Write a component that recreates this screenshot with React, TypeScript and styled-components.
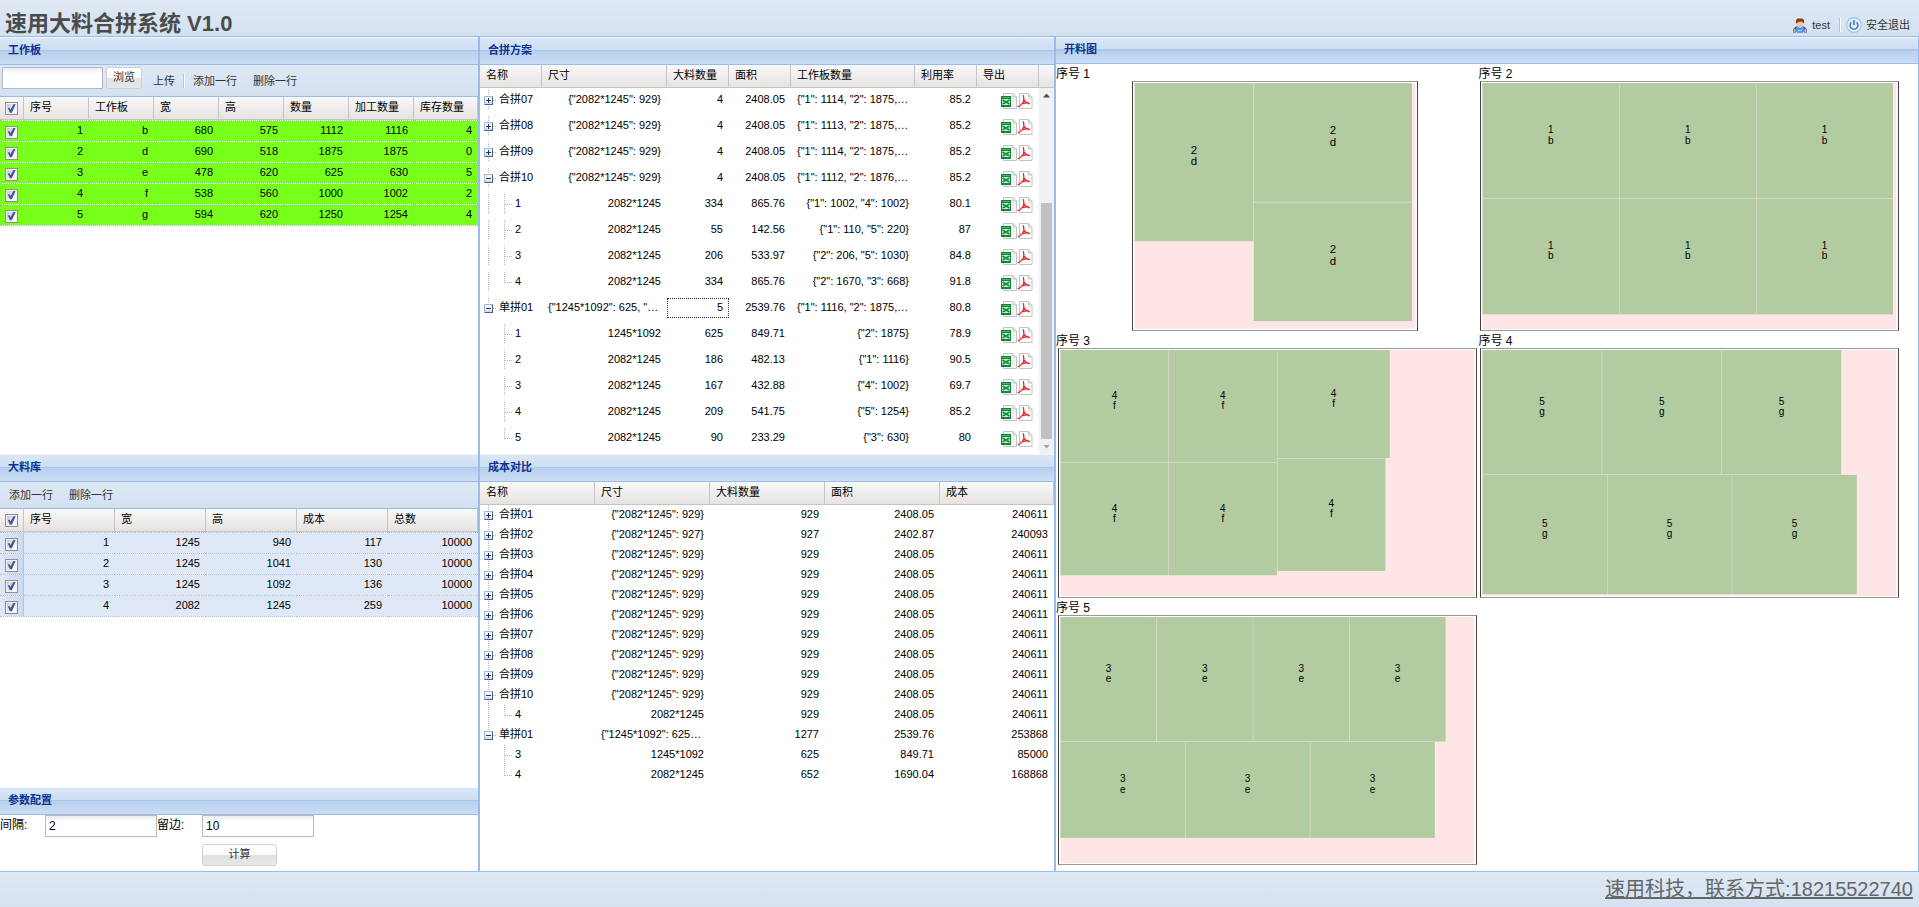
import React from "react";
import styled, { createGlobalStyle, css } from "styled-components";

const LINE = "#99bce8";

const GlobalStyle = createGlobalStyle`
  *, *::before, *::after { box-sizing: border-box; }
  body {
    margin: 0;
    background: #fff;
    color: #000;
    font: 11px/13px "Liberation Sans", "Noto Sans CJK SC", sans-serif;
  }
  button, input { font: inherit; margin: 0; }
`;

/* ---------- page frame ---------- */

const Page = styled.div`
  display: flex;
  flex-direction: column;
  min-height: 100vh;
`;

const TopBar = styled.header`
  display: flex;
  justify-content: space-between;
  align-items: flex-end;
  height: 36px;
  padding: 0 9px 0 5px;
  background: linear-gradient(#dfe9f5, #d3e1f1);
`;

const AppTitle = styled.h1`
  margin: 0;
  color: #4b4b4b;
  font-size: 22px;
  line-height: 24px;
  font-weight: bold;
`;

const UserArea = styled.nav`
  display: flex;
  align-items: center;
  height: 22px;
`;

const Workspace = styled.main`
  flex: 1;
  display: grid;
  grid-template-columns: 480fr 576fr 863fr;
  border-top: 1px solid ${LINE};
  border-bottom: 1px solid ${LINE};
`;

const Column = styled.div<{ $rows: string; $edge: number }>`
  display: grid;
  grid-template-rows: ${(p) => p.$rows};
  min-width: 0;
  border-right: ${(p) => p.$edge}px solid ${LINE};
`;

const Footer = styled.footer`
  display: flex;
  justify-content: flex-end;
  height: 35px;
  padding: 5px 6px;
  background: linear-gradient(#dfe9f5, #d3e1f1);
`;

const ContactLink = styled.a`
  color: #666;
  font-size: 20px;
  line-height: 24px;
`;

/* ---------- panels ---------- */

const Panel = styled.section`
  display: flex;
  flex-direction: column;
  min-width: 0;
`;

const PanelTitle = styled.h2<{ $short?: boolean }>`
  flex: none;
  margin: 0;
  height: ${(p) => (p.$short ? 27 : 28)}px;
  padding: 0 8px;
  border-top: 1px solid #f0f6fc;
  border-bottom: 1px solid ${LINE};
  background: linear-gradient(#dae7f6, #cddef3 45%, #abc7ec 46%, #abc7ec 50%, #b8cfee 51%, #cbddf3);
  color: #0b338f;
  font-size: 11px;
  line-height: ${(p) => (p.$short ? 22 : 24)}px;
  font-weight: bold;
`;

const ToolBar = styled.div<{ $tall?: boolean }>`
  flex: none;
  display: flex;
  align-items: ${(p) => (p.$tall ? "flex-start" : "center")};
  height: ${(p) => (p.$tall ? 32 : 27)}px;
  padding: ${(p) => (p.$tall ? "2px 2px 0" : "0 1px")};
  border-bottom: 1px solid ${LINE};
  background: linear-gradient(#dfe9f5, #d3e1f1);
`;

const ToolGroup = styled.div<{ $low?: boolean }>`
  display: flex;
  align-items: center;
  height: ${(p) => (p.$low ? 28 : 22)}px;
  padding-left: 3px;
`;

const ToolButton = styled.button<{ $tight?: boolean }>`
  display: flex;
  align-items: center;
  gap: 4px;
  height: 22px;
  padding: 0 ${(p) => (p.$tight ? 0 : 8)}px;
  border: 0;
  background: none;
  color: #333;
  line-height: 16px;
  cursor: pointer;
`;

const Divider = styled.span<{ $spaced?: boolean }>`
  width: 2px;
  height: 14px;
  margin: ${(p) => (p.$spaced ? "0 5px 0 9px" : "0")};
  border-left: 1px solid #98c8ff;
  border-right: 1px solid #fff;
`;

const TextField = styled.input<{ $width: number }>`
  width: ${(p) => p.$width}px;
  height: 22px;
  padding: 1px 3px 2px;
  border: 1px solid #b5b8c8;
  background: linear-gradient(#e9eef0, #fff 6px);
  color: #000;
`;

const PushButton = styled.button<{ $width: number }>`
  width: ${(p) => p.$width}px;
  height: 22px;
  padding: 0 0 2px;
  border: 1px solid #d1d1d1;
  border-radius: 3px;
  background: linear-gradient(#fff, #f9f9f9 48%, #e2e2e2 52%, #e7e7e7);
  color: #333;
  cursor: pointer;
`;

/* ---------- grids ---------- */

const headFill = css`
  border-right: 1px solid #c5c5c5;
  border-bottom: 1px solid #c5c5c5;
  background: linear-gradient(#f9f9f9, #e6e2e1);
`;

const Table = styled.table`
  width: 100%;
  table-layout: fixed;
  border-collapse: separate;
  border-spacing: 0;
`;

const Head = styled.th`
  ${headFill}
  height: 23px;
  padding: 0 6px 1px;
  font-weight: normal;
  line-height: 15px;
  text-align: left;
  white-space: nowrap;
`;

const TickHead = styled(Head)`
  padding: 1px 0 0 5px;
`;

type Tone = "green" | "blue";

const BodyRow = styled.tr<{ $tone: Tone }>`
  td {
    height: 21px;
    padding: 3px 6px 4px;
    border-bottom: 1px dotted #a3bae9;
    background: ${(p) => (p.$tone === "green" ? "#78ff1a" : "#dfe8f6")};
    background-clip: padding-box;
    text-align: right;
  }
  &:first-child td { border-top: 1px dotted #a3bae9; }
  td:first-child {
    padding: 3px 0 1px 5px;
    border-right: 1px solid #a9c5ee;
    text-align: left;
    ${(p) => p.$tone === "blue" && "background: linear-gradient(90deg, #dfe8f6, #c9daf1); background-clip: padding-box;"}
  }
`;

const Tick = styled.input`
  appearance: none;
  display: block;
  width: 13px;
  height: 13px;
  padding: 1px;
  border: 1px solid #8e8f8f;
  background: linear-gradient(135deg, #c4c9d2, #f8f8f8 75%) content-box, #f4f4f4;
  &:checked::before {
    content: "";
    display: block;
    width: 9px;
    height: 9px;
    background: #4553a0;
    clip-path: polygon(8% 42%, 28% 42%, 40% 62%, 72% 4%, 96% 4%, 54% 96%, 32% 96%);
  }
`;

/* ---------- trees ---------- */

const TreeFrame = styled.div`
  flex: 1;
  display: flex;
  align-items: stretch;
  min-width: 0;
`;

const TreeMain = styled.div`
  flex: 1;
  min-width: 0;
`;

const TreeCell = styled.td<{ $roomy?: boolean }>`
  padding: ${(p) => (p.$roomy ? "2px 0 4px" : "0")};
`;

const CellBox = styled.div<{ $start?: boolean; $focus?: boolean }>`
  height: 20px;
  padding: 3px 6px 4px;
  overflow: hidden;
  text-align: ${(p) => (p.$start ? "left" : "right")};
  white-space: nowrap;
  ${(p) => p.$focus && "outline: 1px dotted #333; outline-offset: -1px;"}
`;

const NameBox = styled.div`
  display: flex;
  height: 20px;
  white-space: nowrap;
`;

const NodeName = styled.span`
  padding: 3px 0 4px 3px;
`;

const ExportBox = styled.div`
  display: flex;
  justify-content: flex-end;
  height: 20px;
  padding: 3px 6px 0;
`;

const IconButton = styled.button`
  width: 16px;
  height: 16px;
  padding: 0;
  border: 0;
  background: none;
  cursor: pointer;
  svg { display: block; }
`;

const ScrollSide = styled.div`
  flex: none;
  display: flex;
  flex-direction: column;
  width: 15px;
`;

const ScrollCap = styled.div`
  ${headFill}
  border-right: 0;
  height: 23px;
`;

const ScrollTrack = styled.div`
  flex: 1;
  display: grid;
  grid-template-rows: 15px 100fr 236fr 15px;
  justify-items: center;
  align-items: center;
  background: #f1f1f1;
`;

const ScrollThumb = styled.div`
  grid-row: 3;
  align-self: stretch;
  width: 11px;
  background: #c1c1c1;
`;

const ScrollArrow = styled.span<{ $down?: boolean }>`
  grid-row: ${(p) => (p.$down ? 4 : 1)};
  width: 7px;
  height: 4px;
  background: ${(p) => (p.$down ? "#a3a3a3" : "#505050")};
  clip-path: ${(p) => (p.$down ? "polygon(0 0, 100% 0, 50% 100%)" : "polygon(50% 0, 100% 100%, 0 100%)")};
`;

/* ---------- settings form ---------- */

const Settings = styled.form`
  display: grid;
  grid-template-columns: 45px 112px 45px 112px;
  row-gap: 7px;
  align-content: start;
  font-size: 12px;
`;

const FieldLabel = styled.label`
  line-height: 20px;
`;

const SubmitSlot = styled.div`
  grid-column: 4;
  font-size: 11px;
`;

/* ---------- cutting plans ---------- */

const PlanGrid = styled.div`
  display: grid;
  grid-template-columns: 49% 49%;
  align-content: start;
`;

const Plan = styled.figure`
  margin: 0;
  min-width: 0;
`;

const PlanCaption = styled.figcaption`
  height: 17px;
  font-size: 12px;
  line-height: 20px;
`;

const PlanDrawing = styled.svg<{ $width: number; $indent: string }>`
  display: block;
  width: ${(p) => p.$width}px;
  max-width: 100%;
  height: 250px;
  margin: 0 auto 0 ${(p) => p.$indent};
  border: 1px solid;
  border-color: #999 #444;
  font-size: 50px;
  text-anchor: middle;
`;

/* ---------- icons ---------- */

const UserIcon = () => (
  <svg width="16" height="16" viewBox="0 0 16 16" aria-hidden="true">
    <path d="M1 15.500V12.500L4 9.500H12L15 12.500V15.500H12V13L11 15.500H5L4 13V15.500Z" fill="#2b3fc4" />
    <path d="M4.500 10H11.500L12.500 14.500H3.500Z" fill="#3ba2fb" />
    <path d="M6 13H10V14.500H5Z" fill="#8fd0ff" />
    <path d="M1.500 12H3.500V15H1.500ZM12.500 12H14.500V15H12.500Z" fill="#f5b070" />
    <path d="M4.500 4H11.500V8L9.500 10.500H6.500L4.500 8Z" fill="#f9c48d" />
    <path d="M4 6V3L5.500 1.500H10.500L12 3V6H11L10 4.500L6 5L5 6.500Z" fill="#8c3c0a" />
  </svg>
);

const PowerIcon = () => (
  <svg width="16" height="16" viewBox="0 0 16 16" aria-hidden="true">
    <circle cx="8" cy="8" r="7.300" fill="#f4f8fe" stroke="#a9c6f0" strokeWidth="1.400" />
    <circle cx="8" cy="8" r="5.800" fill="#e4eefb" />
    <path d="M5.400 5.400A3.900 3.900 0 1 0 10.600 5.400" fill="none" stroke="#4480c8" strokeWidth="1.600" />
    <path d="M8 3V8" stroke="#3a76c0" strokeWidth="1.600" />
  </svg>
);

const ExcelIcon = () => (
  <svg width="16" height="16" viewBox="0 0 16 16" aria-hidden="true">
    <path d="M2.500 .5H12L15.500 4V15.500H2.500Z" fill="#fbfbfb" stroke="#c3c3c3" />
    <path d="M12 .5V4H15.500" fill="#e6e6e6" stroke="#c3c3c3" />
    <path d="M11 6H14M11 8.500H14M11 11H14" stroke="#e4e4e4" />
    <rect x="0" y="3" width="10" height="11" fill="#12843a" />
    <rect x="1" y="4" width="8" height="1" fill="#46b566" />
    <rect x="1" y="6" width="8" height="6" fill="#d5eeda" />
    <path d="M1.500 7L8.500 11M8.500 7L1.500 11" stroke="#169042" strokeWidth="2" />
  </svg>
);

const PdfIcon = () => (
  <svg width="16" height="16" viewBox="0 0 16 16" aria-hidden="true">
    <path d="M2.500 .5H11.500L15 4V15.500H2.500Z" fill="#fcfcfc" stroke="#c3c3c3" />
    <path d="M11.500 .5V4H15" fill="#e9e9e9" stroke="#c3c3c3" />
    <path d="M5.800 2.500C7.200 2.500 6.400 5 7 7C8 9.300 9.500 10 12.800 10.800M7 6.500C6.500 9.300 4.500 12.500 .8 13.800M3.500 11.500C6 10 9 9.600 12 10" fill="none" stroke="#e3202c" strokeWidth="1.300" />
  </svg>
);

type ElbowKind = "line" | "tee" | "end" | "plus" | "minus" | "minusEnd" | "blank";

const Elbow = ({ kind }: { kind: ElbowKind }) => {
  const boxed = kind === "plus" || kind === "minus" || kind === "minusEnd";
  const bottom = kind === "end" || kind === "minusEnd" ? 11 : 20;
  return (
    <svg width="16" height="20" viewBox="0 0 16 20" shapeRendering="crispEdges" aria-hidden="true">
      {kind !== "blank" && <path d={`M8.500 0V${bottom}`} stroke="#b4b4b4" strokeDasharray="1 1" />}
      {kind !== "blank" && kind !== "line" && <path d="M9 10.500H16" stroke="#b4b4b4" strokeDasharray="1 1" />}
      {boxed && (
        <>
          <rect x="4" y="6" width="9" height="9" fill="#8797b5" />
          <rect x="4" y="6" width="8" height="8" fill="#a9b8d2" />
          <rect x="5" y="7" width="7" height="7" fill="#f3f6fb" />
          <rect x="5" y="12" width="7" height="2" fill="#d3deee" />
          <path d="M12.500 7V15M5 14.500H13" stroke="#4a6187" />
          <path d="M6 10.500H11" stroke="#16356c" />
          {kind === "plus" && <path d="M8.500 8V13" stroke="#16356c" />}
        </>
      )}
    </svg>
  );
};

/* ---------- data ---------- */

const workBoards = [
  ["1", "b", "680", "575", "1112", "1116", "4"],
  ["2", "d", "690", "518", "1875", "1875", "0"],
  ["3", "e", "478", "620", "625", "630", "5"],
  ["4", "f", "538", "560", "1000", "1002", "2"],
  ["5", "g", "594", "620", "1250", "1254", "4"],
];

const sheets = [
  ["1", "1245", "940", "117", "10000"],
  ["2", "1245", "1041", "130", "10000"],
  ["3", "1245", "1092", "136", "10000"],
  ["4", "2082", "1245", "259", "10000"],
];

interface TreeNode {
  name: string;
  elbows: ElbowKind[];
  values: string[];
  focus?: number;
}

const node = (elbows: ElbowKind[], name: string, ...values: string[]): TreeNode => ({ name, elbows, values });

const plans: TreeNode[] = [
  node(["plus"], "合拼07", '{"2082*1245": 929}', "4", "2408.05", '{"1": 1114, "2": 1875,…', "85.2"),
  node(["plus"], "合拼08", '{"2082*1245": 929}', "4", "2408.05", '{"1": 1113, "2": 1875,…', "85.2"),
  node(["plus"], "合拼09", '{"2082*1245": 929}', "4", "2408.05", '{"1": 1114, "2": 1875,…', "85.2"),
  node(["minus"], "合拼10", '{"2082*1245": 929}', "4", "2408.05", '{"1": 1112, "2": 1876,…', "85.2"),
  node(["line", "tee"], "1", "2082*1245", "334", "865.76", '{"1": 1002, "4": 1002}', "80.1"),
  node(["line", "tee"], "2", "2082*1245", "55", "142.56", '{"1": 110, "5": 220}', "87"),
  node(["line", "tee"], "3", "2082*1245", "206", "533.97", '{"2": 206, "5": 1030}', "84.8"),
  node(["line", "end"], "4", "2082*1245", "334", "865.76", '{"2": 1670, "3": 668}', "91.8"),
  { ...node(["minusEnd"], "单拼01", '{"1245*1092": 625, "…', "5", "2539.76", '{"1": 1116, "2": 1875,…', "80.8"), focus: 1 },
  node(["blank", "tee"], "1", "1245*1092", "625", "849.71", '{"2": 1875}', "78.9"),
  node(["blank", "tee"], "2", "2082*1245", "186", "482.13", '{"1": 1116}', "90.5"),
  node(["blank", "tee"], "3", "2082*1245", "167", "432.88", '{"4": 1002}', "69.7"),
  node(["blank", "tee"], "4", "2082*1245", "209", "541.75", '{"5": 1254}', "85.2"),
  node(["blank", "end"], "5", "2082*1245", "90", "233.29", '{"3": 630}', "80"),
];

const collapsed = (name: string, count = "929", area = "2408.05", cost = "240611") =>
  node(["plus"], name, `{"2082*1245": ${count}}`, count, area, cost);

const costs: TreeNode[] = [
  collapsed("合拼01"),
  collapsed("合拼02", "927", "2402.87", "240093"),
  collapsed("合拼03"),
  collapsed("合拼04"),
  collapsed("合拼05"),
  collapsed("合拼06"),
  collapsed("合拼07"),
  collapsed("合拼08"),
  collapsed("合拼09"),
  { ...collapsed("合拼10"), elbows: ["minus"] },
  node(["line", "end"], "4", "2082*1245", "929", "2408.05", "240611"),
  node(["minusEnd"], "单拼01", '{"1245*1092": 625…', "1277", "2539.76", "253868"),
  node(["blank", "tee"], "3", "1245*1092", "625", "849.71", "85000"),
  node(["blank", "end"], "4", "2082*1245", "652", "1690.04", "168868"),
];

/* Pieces are x, y, width, height in millimetres on the sheet. */
interface CutPlan {
  sheet: [number, number];
  drawn: number;
  indent: string;
  label: [string, string];
  pieces: [number, number, number, number][];
}

const wideSheet = { sheet: [2082, 1245] as [number, number], drawn: 419, indent: "2px" };

const cutPlans: CutPlan[] = [
  {
    sheet: [1245, 1092],
    drawn: 286,
    indent: "18%",
    label: ["2", "d"],
    pieces: [[10, 10, 518, 690], [530, 10, 690, 518], [530, 530, 690, 518]],
  },
  {
    ...wideSheet,
    label: ["1", "b"],
    pieces: [
      [10, 10, 680, 575], [692, 10, 680, 575], [1374, 10, 680, 575],
      [10, 587, 680, 575], [692, 587, 680, 575], [1374, 587, 680, 575],
    ],
  },
  {
    ...wideSheet,
    label: ["4", "f"],
    pieces: [
      [10, 10, 538, 560], [550, 10, 538, 560], [1090, 10, 560, 538],
      [10, 572, 538, 560], [550, 572, 538, 560], [1090, 550, 538, 560],
    ],
  },
  {
    ...wideSheet,
    label: ["5", "g"],
    pieces: [
      [10, 10, 594, 620], [606, 10, 594, 620], [1202, 10, 594, 620],
      [10, 632, 620, 594], [632, 632, 620, 594], [1254, 632, 620, 594],
    ],
  },
  {
    ...wideSheet,
    label: ["3", "e"],
    pieces: [
      [10, 10, 478, 620], [490, 10, 478, 620], [970, 10, 478, 620], [1450, 10, 478, 620],
      [10, 632, 620, 478], [632, 632, 620, 478], [1254, 632, 620, 478],
    ],
  },
];

/* ---------- composed parts ---------- */

interface CheckGridProps {
  heads: string[];
  widths: number[];
  rows: string[][];
  tone: Tone;
}

const CheckGrid = ({ heads, widths, rows, tone }: CheckGridProps) => (
  <Table>
    <colgroup>
      <col width="24" />
      {widths.map((w, i) => <col key={i} width={w} />)}
    </colgroup>
    <thead>
      <tr>
        <TickHead><Tick type="checkbox" defaultChecked aria-label="全选" /></TickHead>
        {heads.map((h) => <Head key={h}>{h}</Head>)}
      </tr>
    </thead>
    <tbody>
      {rows.map((row) => (
        <BodyRow key={row[0]} $tone={tone}>
          <td><Tick type="checkbox" defaultChecked aria-label={`序号 ${row[0]}`} /></td>
          {row.map((value, i) => <td key={i}>{value}</td>)}
        </BodyRow>
      ))}
    </tbody>
  </Table>
);

interface TreeGridProps {
  heads: string[];
  widths: number[];
  nodes: TreeNode[];
  exportable?: boolean;
}

const TreeGrid = ({ heads, widths, nodes, exportable }: TreeGridProps) => (
  <Table>
    <colgroup>
      {widths.map((w, i) => <col key={i} width={w} />)}
    </colgroup>
    <thead>
      <tr>{heads.map((h) => <Head key={h}>{h}</Head>)}</tr>
    </thead>
    <tbody>
      {nodes.map((n, r) => (
        <tr key={r}>
          <TreeCell $roomy={exportable}>
            <NameBox>
              {n.elbows.map((kind, i) => <Elbow key={i} kind={kind} />)}
              <NodeName>{n.name}</NodeName>
            </NameBox>
          </TreeCell>
          {n.values.map((value, i) => (
            <TreeCell key={i} $roomy={exportable}>
              <CellBox $start={value.endsWith("…")} $focus={n.focus === i}>{value}</CellBox>
            </TreeCell>
          ))}
          {exportable && (
            <TreeCell $roomy>
              <ExportBox>
                <IconButton aria-label="Excel"><ExcelIcon /></IconButton>
                <IconButton aria-label="PDF"><PdfIcon /></IconButton>
              </ExportBox>
            </TreeCell>
          )}
        </tr>
      ))}
    </tbody>
  </Table>
);

const CutDrawing = ({ plan }: { plan: CutPlan }) => {
  const [w, h] = plan.sheet;
  return (
    <PlanDrawing $width={plan.drawn} $indent={plan.indent} viewBox={`5 5 ${w - 10} ${h - 10}`}>
      <rect x="10" y="10" width={w - 20} height={h - 20} fill="#ffe6e6" />
      {plan.pieces.map(([x, y, pw, ph], i) => (
        <g key={i}>
          <rect x={x} y={y} width={pw} height={ph} fill="#b2cba1" />
          <text x={x + pw / 2} y={y + ph / 2 - 37}>{plan.label[0]}</text>
          <text x={x + pw / 2} y={y + ph / 2 + 14}>{plan.label[1]}</text>
        </g>
      ))}
    </PlanDrawing>
  );
};

export default function App() {
  return (
    <Page>
      <GlobalStyle />
      <TopBar>
        <AppTitle>速用大料合拼系统 V1.0</AppTitle>
        <UserArea>
          <ToolButton $tight><UserIcon />test</ToolButton>
          <Divider $spaced />
          <ToolButton $tight><PowerIcon />安全退出</ToolButton>
        </UserArea>
      </TopBar>

      <Workspace>
        <Column $rows="417fr 333fr 84fr" $edge={2}>
          <Panel>
            <PanelTitle>工作板</PanelTitle>
            <ToolBar $tall>
              <TextField $width={101} type="text" aria-label="文件" readOnly />
              <ToolGroup>
                <PushButton $width={36}>浏览</PushButton>
              </ToolGroup>
              <ToolGroup $low>
                <ToolButton>上传</ToolButton>
                <Divider />
                <ToolButton>添加一行</ToolButton>
                <ToolButton>删除一行</ToolButton>
              </ToolGroup>
            </ToolBar>
            <CheckGrid
              heads={["序号", "工作板", "宽", "高", "数量", "加工数量", "库存数量"]}
              widths={[65, 65, 65, 65, 65, 65, 64]}
              rows={workBoards}
              tone="green"
            />
          </Panel>
          <Panel>
            <PanelTitle>大料库</PanelTitle>
            <ToolBar>
              <ToolButton>添加一行</ToolButton>
              <ToolButton>删除一行</ToolButton>
            </ToolBar>
            <CheckGrid
              heads={["序号", "宽", "高", "成本", "总数"]}
              widths={[91, 91, 91, 91, 90]}
              rows={sheets}
              tone="blue"
            />
          </Panel>
          <Panel>
            <PanelTitle>参数配置</PanelTitle>
            <Settings onSubmit={(e) => e.preventDefault()}>
              <FieldLabel htmlFor="gap">间隔:</FieldLabel>
              <TextField $width={112} id="gap" type="text" defaultValue="2" />
              <FieldLabel htmlFor="edge">留边:</FieldLabel>
              <TextField $width={112} id="edge" type="text" defaultValue="10" />
              <SubmitSlot>
                <PushButton $width={75} type="submit">计算</PushButton>
              </SubmitSlot>
            </Settings>
          </Panel>
        </Column>

        <Column $rows="417fr 417fr" $edge={2}>
          <Panel>
            <PanelTitle>合拼方案</PanelTitle>
            <TreeFrame>
              <TreeMain>
                <TreeGrid
                  heads={["名称", "尺寸", "大料数量", "面积", "工作板数量", "利用率", "导出"]}
                  widths={[62, 125, 62, 62, 124, 62, 62]}
                  nodes={plans}
                  exportable
                />
              </TreeMain>
              <ScrollSide>
                <ScrollCap />
                <ScrollTrack>
                  <ScrollArrow />
                  <ScrollThumb />
                  <ScrollArrow $down />
                </ScrollTrack>
              </ScrollSide>
            </TreeFrame>
          </Panel>
          <Panel>
            <PanelTitle>成本对比</PanelTitle>
            <TreeGrid
              heads={["名称", "尺寸", "大料数量", "面积", "成本"]}
              widths={[115, 115, 115, 115, 114]}
              nodes={costs}
            />
          </Panel>
        </Column>

        <Column $rows="1fr" $edge={1}>
          <Panel>
            <PanelTitle $short>开料图</PanelTitle>
            <PlanGrid>
              {cutPlans.map((plan, i) => (
                <Plan key={i}>
                  <PlanCaption>序号 {i + 1}</PlanCaption>
                  <CutDrawing plan={plan} />
                </Plan>
              ))}
            </PlanGrid>
          </Panel>
        </Column>
      </Workspace>

      <Footer>
        <ContactLink href="#contact">速用科技，联系方式:18215522740</ContactLink>
      </Footer>
    </Page>
  );
}
